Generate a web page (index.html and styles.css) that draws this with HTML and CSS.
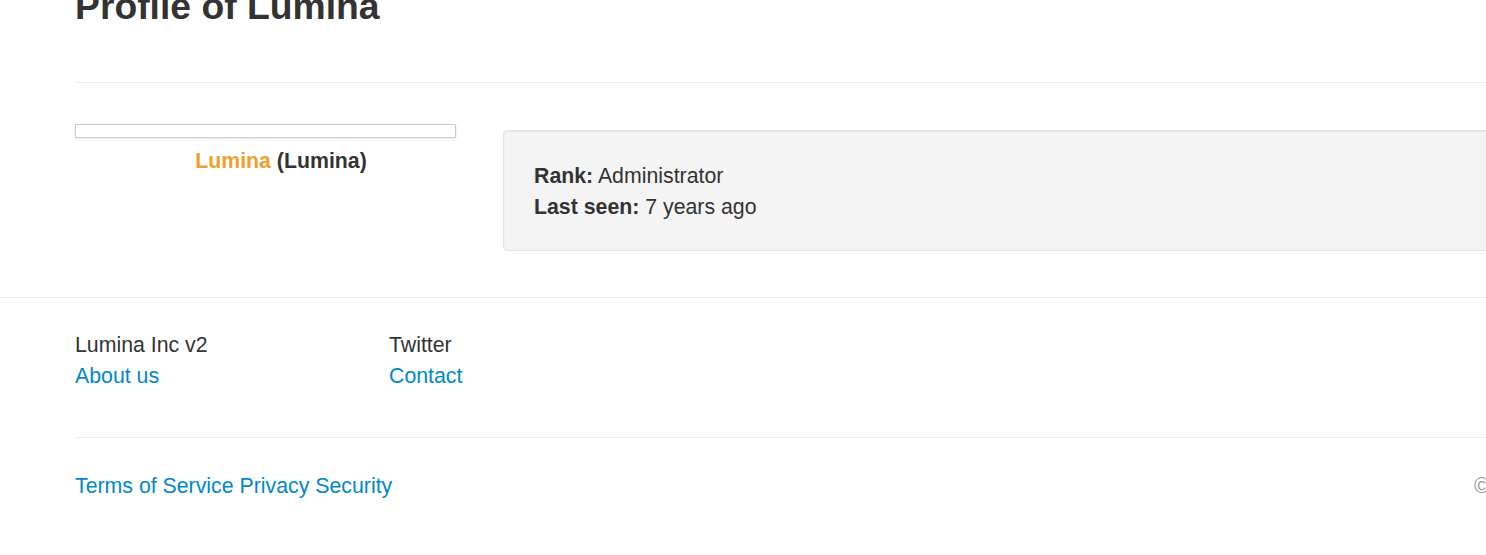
FILE: index.html
```html
<!DOCTYPE html>
<html lang="en">
<head>
<meta charset="utf-8">
<title>Profile of Lumina</title>
<link rel="stylesheet" href="styles.css">
</head>
<body>
<div class="page">
  <main class="container">
    <header class="page-header">
      <h1>Profile of Lumina</h1>
    </header>
    <section class="profile">
      <div class="profile-side">
        <div class="avatar"></div>
        <div class="profile-name"><span class="user-name">Lumina</span> (Lumina)</div>
      </div>
      <div class="well">
        <div><strong>Rank:</strong> Administrator</div>
        <div><strong>Last seen:</strong> 7 years ago</div>
      </div>
    </section>
  </main>
  <footer class="site-footer">
    <div class="container">
      <div class="footer-cols">
        <div class="footer-col">
          <div>Lumina Inc v2</div>
          <a href="#">About us</a>
        </div>
        <div class="footer-col">
          <div>Twitter</div>
          <a href="#">Contact</a>
        </div>
      </div>
      <div class="footer-bottom">
        <div class="legal">
          <a href="#">Terms of Service</a> <a href="#">Privacy</a> <a href="#">Security</a>
        </div>
        <div class="copyright">© 2017 Lumina Inc</div>
      </div>
    </div>
  </footer>
</div>
</body>
</html>
```
FILE: styles.css
```css
html {
  overflow: hidden;
}
body {
  margin: 0;
  font-family: "Liberation Sans", Arial, sans-serif;
  font-size: 21.3px;
  line-height: 31px;
  color: #333;
  background: #fff;
}
a {
  color: #0088cc;
  text-decoration: none;
}
.page {
  width: 1700px;
}
.container {
  width: 1578px;
  padding-left: 75px;
}
.page-header {
  margin-top: -14px;
  padding-bottom: 55px;
  border-bottom: 1px solid #eee;
}
.page-header h1 {
  margin: 0;
  font-size: 37.3px;
  line-height: 41px;
  font-weight: bold;
}
.profile {
  display: flex;
  align-items: flex-start;
  gap: 16px;
  margin-top: 41px;
}
.profile-side {
  width: 412px;
  flex: none;
}
.avatar {
  width: 379px;
  height: 12px;
  border: 1px solid #ccc;
  box-shadow: 0 1px 3px rgba(0, 0, 0, 0.1);
  background: #fff;
}
.profile-name {
  margin-top: 8px;
  text-align: center;
  font-weight: bold;
}
.user-name {
  color: #f0a030;
}
.well {
  flex: 1;
  margin-top: 6px;
  padding: 30px 30px 27px;
  background: #f4f4f4;
  border: 1px solid #e3e3e3;
  border-radius: 4px;
  box-shadow: inset 0 1px 2px rgba(0, 0, 0, 0.06);
}
.site-footer {
  margin-top: 46px;
  border-top: 1px solid #eee;
  padding-top: 32px;
  padding-bottom: 40px;
}
.footer-cols {
  display: flex;
  padding-bottom: 45px;
  border-bottom: 1px solid #eee;
}
.footer-col {
  width: 314px;
  display: flex;
  flex-direction: column;
  align-items: flex-start;
}
.footer-bottom {
  display: flex;
  justify-content: space-between;
  padding-top: 33px;
}
.copyright {
  color: #999;
}
```
